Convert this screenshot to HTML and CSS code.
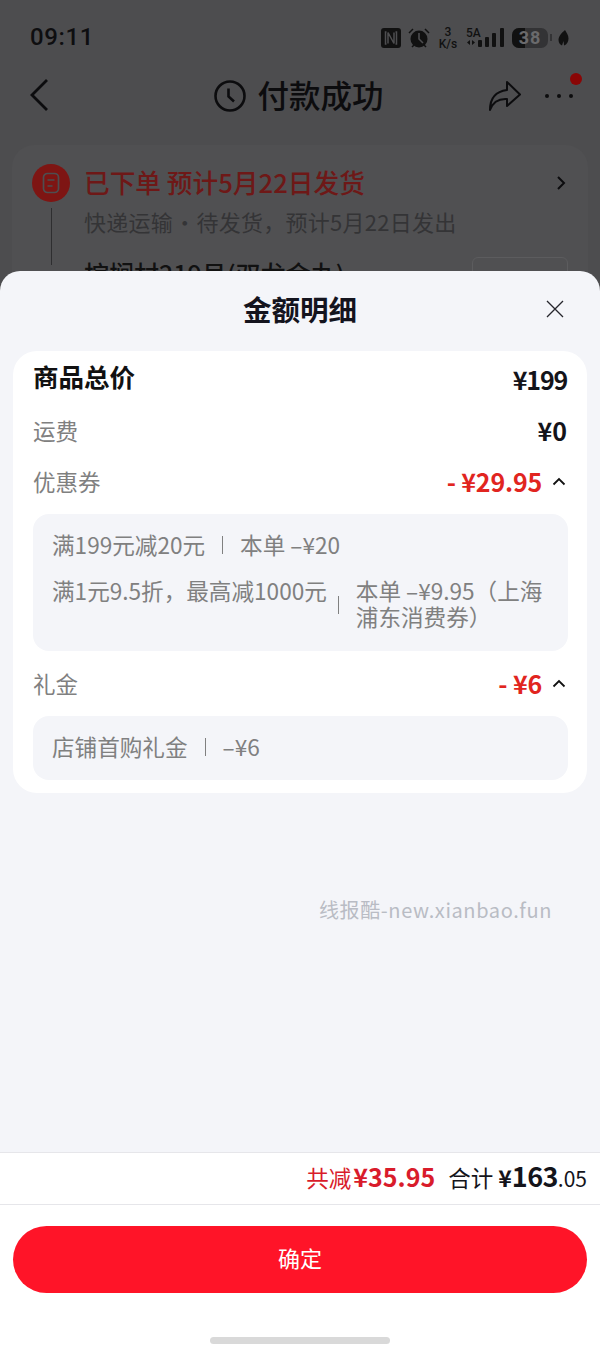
FILE: index.html
```html
<!DOCTYPE html>
<html lang="zh">
<head>
<meta charset="utf-8">
<title>金额明细</title>
<link rel="stylesheet" href="styles.css">
</head>
<body>
<div class="screen">
  <div class="status">
    <span class="time">09:11</span>
    <div class="status-icons">
      <svg class="nfc" width="20" height="20" viewBox="0 0 20 20"><rect width="20" height="20" rx="3" fill="#111"/><path d="M5.500 4h-1v12h1M14.500 4h1v12h-1M7 15.500v-11l6 11v-11" fill="none" stroke="#4e4e50" stroke-width="1.500"/></svg>
      <svg class="alarm" width="22" height="20" viewBox="0 0 22 20"><circle cx="11" cy="11" r="8.500" fill="#111"/><path d="M11 5v6l4 4" fill="none" stroke="#4e4e50" stroke-width="1.600"/><path d="M1 5l4-4M21 5l-4-4M4 19l2-2M18 19l-2-2" stroke="#111" stroke-width="1.500"/></svg>
      <span class="speed"><span>3</span><span>K/s</span></span>
      <div class="signal">
        <span class="net">5A</span>
        <svg width="40" height="20" viewBox="0 0 40 20"><path d="M1 14.500l3-2.500v5zM9 14.500l-3-2.500v5z" fill="#111"/><rect x="12" y="12" width="4" height="7" rx="1" fill="#111"/><rect x="19" y="9" width="4" height="10" rx="1" fill="#111"/><rect x="26" y="5" width="4" height="14" rx="1" fill="#111"/><rect x="34" y="0" width="4" height="19" rx="1" fill="#111"/></svg>
      </div>
      <div class="battery"><span class="battery-fill"></span><span class="battery-num">38</span></div>
      <span class="battery-tip"></span>
      <svg class="leaf" width="11" height="18" viewBox="0 0 11 18"><path d="M7 1C3.500 4 .5 7.500.5 11c0 3 2 5 3.500 5.500L5.500 12l.6 4.500C9 15.500 10.500 12.500 10.500 9.500 10.500 6 8.500 3.500 7 1z" fill="#111"/></svg>
    </div>
  </div>

  <div class="nav">
    <svg class="back" width="20" height="34" viewBox="0 0 20 34"><path d="M18 2L3 17l15 15" fill="none" stroke="#0c0c0e" stroke-width="2.800"/></svg>
    <div class="nav-title">
      <svg width="34" height="34" viewBox="0 0 34 34"><circle cx="17" cy="17" r="14.500" fill="none" stroke="#0c0c0e" stroke-width="2.600"/><path d="M15.500 9.500v8l5.500 5" fill="none" stroke="#0c0c0e" stroke-width="2.600"/></svg>
      <span>付款成功</span>
    </div>
    <svg class="share" width="34" height="32" viewBox="0 0 34 32"><path d="M19 2l13 12.500L19 26v-7C11 18.500 5 21.500 2 30c0-11 5-18.500 17-20z" fill="none" stroke="#0c0c0e" stroke-width="2" stroke-linejoin="round"/></svg>
    <div class="more">
      <i></i><i></i><i></i>
      <span class="dot"></span>
    </div>
  </div>

  <div class="order-card">
    <div class="order-head">
      <span class="order-icon">
        <svg width="20" height="24" viewBox="0 0 20 24"><rect x="2.500" y="2.500" width="15" height="19" rx="4" fill="none" stroke="#4e4e50" stroke-width="1.700"/><path d="M6.500 9h7M6.500 15h5" stroke="#4e4e50" stroke-width="1.600"/></svg>
      </span>
      <span class="order-title">已下单 预计5月22日发货</span>
      <svg class="order-arrow" width="10" height="16" viewBox="0 0 10 16"><path d="M2 2l6 6-6 6" fill="none" stroke="#0c0c0e" stroke-width="2"/></svg>
    </div>
    <div class="order-sub">快递运输 · 待发货，预计5月22日发出</div>
    <div class="order-item">
      <span class="order-name">棕榈村219号(双龙金丸)</span>
      <span class="order-btn"></span>
    </div>
  </div>

  <div class="sheet">
    <header class="sheet-head">
      <h1>金额明细</h1>
      <svg class="close" width="18" height="18" viewBox="0 0 18 18"><path d="M1 1l16 16M17 1L1 17" fill="none" stroke="#26262c" stroke-width="1.300"/></svg>
    </header>

    <section class="detail">
      <div class="row row-total">
        <span class="total-label">商品总价</span>
        <span class="amount">¥199</span>
      </div>
      <div class="row row-ship">
        <span class="label">运费</span>
        <span class="amount">¥0</span>
      </div>
      <div class="row row-coupon">
        <span class="label">优惠券</span>
        <span class="minus">- ¥29.95</span>
        <svg class="chev" width="14" height="9" viewBox="0 0 14 9"><path d="M1.500 7.500L7 2l5.500 5.500" fill="none" stroke="#111" stroke-width="1.800"/></svg>
      </div>
      <div class="box box-coupon">
        <div class="line">
          <span>满199元减20元</span><i class="sep"></i><span>本单 –¥20</span>
        </div>
        <div class="line line-wrap">
          <span class="wrap-name">满1元9.5折，最高减1000元</span><i class="sep"></i><span class="wrap-note">本单 –¥9.95（上海浦东消费券）</span>
        </div>
      </div>
      <div class="row row-gift">
        <span class="label">礼金</span>
        <span class="minus">- ¥6</span>
        <svg class="chev" width="14" height="9" viewBox="0 0 14 9"><path d="M1.500 7.500L7 2l5.500 5.500" fill="none" stroke="#111" stroke-width="1.800"/></svg>
      </div>
      <div class="box box-gift">
        <div class="line">
          <span>店铺首购礼金</span><i class="sep"></i><span>–¥6</span>
        </div>
      </div>
    </section>

    <div class="watermark">线报酷-new.xianbao.fun</div>

    <div class="summary">
      <span class="saved">共减<b>¥35.95</b></span>
      <span class="sum">合计 <span class="yen">¥</span><b>163</b><span class="cents">.05</span></span>
    </div>
    <div class="actions">
      <button class="confirm" type="button">确定</button>
      <span class="home-bar"></span>
    </div>
  </div>
</div>
</body>
</html>
```
FILE: styles.css
```css
* { box-sizing: border-box; }
html, body { margin: 0; padding: 0; }
body {
  width: 600px;
  height: 1354px;
  overflow: hidden;
  font-family: "Noto Sans CJK SC", "Noto Sans", sans-serif;
  color: #111;
}
.screen {
  position: relative;
  width: 600px;
  height: 1354px;
  overflow: hidden;
  background: #4d4d4f;
}
.status {
  height: 74px;
  display: flex;
  align-items: center;
  justify-content: space-between;
  padding: 0 31px 0 30px;
}
.time { font: 500 24px/1 "Roboto", sans-serif; letter-spacing: .6px; color: #0e0e10; }
.status-icons { display: flex; align-items: center; height: 20px; margin-top: 1px; }
.status-icons svg { display: block; flex: none; }
.nfc { margin-right: 7px; }
.alarm { margin-right: 8px; }
.speed {
  width: 20px; display: flex; flex-direction: column; align-items: center;
  font: 500 12px/12px "Roboto", sans-serif; color: #111; margin-right: 8px; white-space: nowrap;
}
.signal { position: relative; width: 40px; height: 20px; margin-right: 6px; }
.net { position: absolute; left: 0; top: -1px; font: 500 12px/12px "Roboto", sans-serif; color: #111; }
.battery {
  position: relative; width: 36px; height: 20px; border-radius: 7px;
  background: #333335; overflow: hidden; display: flex; align-items: center; justify-content: center;
}
.battery-fill { position: absolute; left: 0; top: 0; bottom: 0; width: 13px; background: #111; }
.battery-num { position: relative; font: 700 18px/1 "Roboto", sans-serif; color: #6a6a6c; letter-spacing: 1px; }
.battery-tip { width: 2px; height: 7px; background: #333335; margin: 0 6px 0 2px; }

.nav { position: relative; height: 50px; margin-top: -3px; }
.back { position: absolute; left: 29px; top: 7px; }
.nav-title {
  display: flex; align-items: center; justify-content: center; gap: 10px;
  height: 50px; padding-right: 3px; font-size: 31.500px; font-weight: 500; color: #0c0c0e; line-height: 1;
}
.nav-title span { margin-top: -3px; }
.share { position: absolute; left: 488px; top: 9px; }
.more { position: absolute; left: 545px; top: 23px; display: flex; gap: 8px; }
.more i { width: 4px; height: 4px; border-radius: 50%; background: #0c0c0e; }
.dot {
  position: absolute; left: 25px; top: -21px; width: 12px; height: 12px;
  border-radius: 50%; background: #8a0606;
}

.order-card {
  margin: 24px 12px 0;
  height: 300px;
  border-radius: 22px;
  background: #505052;
  padding: 19px 20px 0;
  position: relative;
}
.order-head { display: flex; align-items: center; height: 38px; }
.order-icon {
  width: 38px; height: 38px; border-radius: 50%; background: #7e1513;
  display: flex; align-items: center; justify-content: center; margin-right: 15px; flex: none;
}
.order-title { margin-left: -1px; margin-top: -2px; font-size: 25.700px; font-weight: 500; color: #6e1817; line-height: 1; white-space: nowrap; }
.order-arrow { margin-left: auto; margin-right: 2px; }
.order-sub { margin: 4px 0 0 52px; font-size: 22px; line-height: 30px; color: #343436; letter-spacing: .25px; word-spacing: -4.500px; white-space: nowrap; }
.order-card::before {
  content: ""; position: absolute; left: 39px; top: 63px; height: 57px; width: 1px; background: #2e2e30;
}
.order-item { display: flex; justify-content: space-between; align-items: flex-start; margin: 22px 0 0 52px; }
.order-name { font-size: 25px; font-weight: 500; line-height: 30px; color: #111; white-space: nowrap; }
.order-btn { width: 96px; height: 50px; margin-top: -1px; border: 1px solid #5c5c5e; border-radius: 6px; }

.sheet {
  position: absolute;
  left: 0; right: 0; top: 271px; bottom: 0;
  background: #f4f5f9;
  border-radius: 20px 20px 0 0;
  display: flex;
  flex-direction: column;
}
.sheet-head { position: relative; height: 80px; flex: none; }
.sheet-head h1 {
  margin: 0; text-align: center; font-size: 28.500px; font-weight: 700; line-height: 76px; color: #14141e;
}
.close { position: absolute; left: 546px; top: 29px; }

.detail {
  margin: 0 13px;
  height: 442px;
  flex: none;
  background: #fff;
  border-radius: 24px;
  padding: 0 19px 0 20px;
}
.row { display: flex; align-items: center; }
.row .label, .row .total-label { margin-right: auto; }
.row-total { height: 56px; }
.row-ship { height: 51px; margin-top: -2px; }
.row-coupon { height: 51px; }
.row-gift { height: 65px; }
.total-label { font-size: 25.500px; font-weight: 700; color: #111; line-height: 1; margin-top: -6px; }
.label { font-size: 22.500px; color: #808080; line-height: 1; }
.amount { font-size: 25px; font-weight: 700; color: #14141a; line-height: 1; margin-left: auto; margin-right: 1px; }
.row-total .amount { letter-spacing: -1.200px; }
.minus { font-size: 25px; font-weight: 700; line-height: 1; color: #e1251f; letter-spacing: -.2px; }
.chev { margin-left: 10px; flex: none; margin-right: 2px; margin-top: -1px; }
.box { background: #f4f5f9; border-radius: 16px; padding: 0 19px; font-size: 22.600px; color: #808080; }
.box-coupon { height: 137px; margin-top: 7px; }
.box-gift { height: 64px; }
.box-gift .line { height: 62px; }
.box-coupon .line:first-child { height: 61px; }
.line { display: flex; align-items: center; line-height: 26px; }
.line span { flex: none; }
.sep { flex: none; width: 1px; height: 18px; background: #808080; margin: 0 17px; }
.line-wrap { align-items: flex-start; margin-top: 3px; }
.line-wrap .sep { margin: 18px 17px 0 11px; }
.line .wrap-note { flex: 1; min-width: 0; }

.watermark {
  position: absolute; left: 319px; top: 627px;
  font-size: 20px; line-height: 24px; color: #b9bcc4; letter-spacing: .6px; white-space: nowrap;
}
.summary {
  margin-top: auto;
  height: 53px;
  flex: none;
  background: #fff;
  border-top: 1px solid #e6e6ea;
  border-bottom: 1px solid #e6e6ea;
  display: flex;
  align-items: baseline;
  justify-content: flex-end;
  padding: 9px 13px 0 0;
  line-height: 1;
}
.saved { font-size: 22.500px; color: #d91c2b; margin-right: 13px; white-space: nowrap; }
.saved b { font-size: 25px; font-weight: 700; margin-left: 2px; }
.sum { font-size: 22.500px; color: #14141a; display: flex; align-items: baseline; white-space: pre; }
.sum .yen { font-size: 23px; font-weight: 700; }
.sum b { font-size: 27px; font-weight: 700; letter-spacing: -.6px; }
.sum .cents { font-size: 21px; font-weight: 400; }
.actions {
  height: 149px;
  flex: none;
  background: #fff;
  padding: 21px 13px 0;
  display: flex;
  flex-direction: column;
  align-items: center;
}
.confirm {
  width: 100%; height: 67px; border: 0; border-radius: 34px; background: #ff1428;
  color: #fff; font: 400 22px/1 "Noto Sans CJK SC", sans-serif; padding: 0 0 6px;
}
.home-bar { width: 180px; height: 7px; border-radius: 4px; background: #d9d9d9; margin-top: 44px; }
```
